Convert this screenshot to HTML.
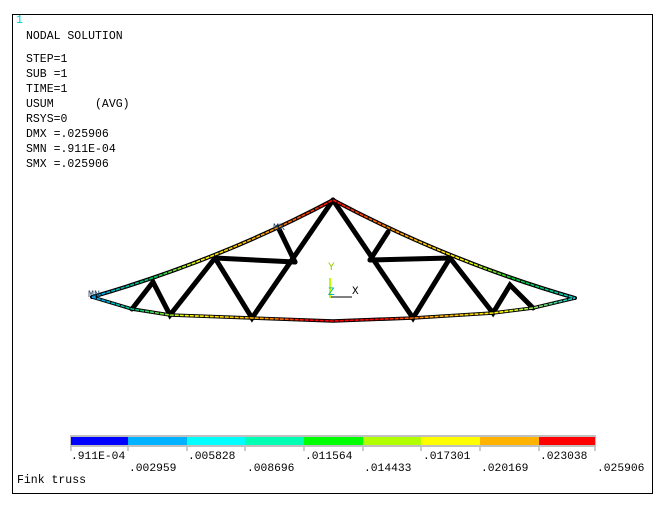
<!DOCTYPE html>
<html><head><style>
body{margin:0;width:669px;height:509px;background:#fff;overflow:hidden;position:relative;font-family:"Liberation Mono",monospace;}
.t{position:absolute;font-size:11.5px;color:#000;white-space:pre;line-height:12px;}
#frame{position:absolute;left:12px;top:14px;width:641px;height:480px;border:1.5px solid #000;box-sizing:border-box;}
</style></head><body>
<div id="frame"></div>
<div class="t" style="left:16px;top:15px;color:#0cc">1</div>
<div class="t" style="left:26px;top:31px">NODAL SOLUTION</div>
<div class="t" style="left:26px;top:54px">STEP=1</div>
<div class="t" style="left:26px;top:69px">SUB =1</div>
<div class="t" style="left:26px;top:84px">TIME=1</div>
<div class="t" style="left:26px;top:99px">USUM      (AVG)</div>
<div class="t" style="left:26px;top:114px">RSYS=0</div>
<div class="t" style="left:26px;top:129px">DMX =.025906</div>
<div class="t" style="left:26px;top:144px">SMN =.911E-04</div>
<div class="t" style="left:26px;top:159px">SMX =.025906</div>
<svg width="669" height="509" style="position:absolute;left:0;top:0">
<defs>
<linearGradient id="gl" x1="0" x2="1"><stop offset="0" stop-color="#0af"/><stop offset=".25" stop-color="#0c6"/><stop offset=".45" stop-color="#ff0"/><stop offset=".7" stop-color="#fa0"/><stop offset="1" stop-color="#f00"/></linearGradient>
<linearGradient id="gr" x1="0" x2="1"><stop offset="0" stop-color="#f00"/><stop offset=".3" stop-color="#fa0"/><stop offset=".55" stop-color="#ff0"/><stop offset=".75" stop-color="#0c3"/><stop offset="1" stop-color="#0cc"/></linearGradient>
<linearGradient id="gb" x1="0" x2="1"><stop offset="0" stop-color="#0af"/><stop offset=".1" stop-color="#0c6"/><stop offset=".2" stop-color="#ff0"/><stop offset=".35" stop-color="#fa0"/><stop offset=".45" stop-color="#f00"/><stop offset=".6" stop-color="#f00"/><stop offset=".7" stop-color="#fa0"/><stop offset=".85" stop-color="#ff0"/><stop offset="1" stop-color="#0cc"/></linearGradient>
</defs>
<g stroke="#000" stroke-linecap="round" fill="none">
<path d="M92,297 Q220,260 333,200" stroke-width="4"/>
<path d="M333,200 Q450,262 575,298" stroke-width="4"/>
<path d="M92,297 L132,309 L170,315 L252,318 L333,321 L413,318 L493,313 L533,308 L575,298" stroke-width="3.5"/>
<g stroke-width="5">
<path d="M132,309 L153,282 L170,315 L215,258 L252,318 L333,200"/>
<path d="M215,258 L295,262"/>
<path d="M295,262 L278,227"/>
<path d="M533,308 L510,285 L493,313 L450,258 L413,318 L333,200"/>
<path d="M450,258 L370,260"/>
<path d="M370,260 L388,232"/>
</g>
</g>
<g fill="none" stroke-width="1.6" stroke-dasharray="4 1">
<path d="M92,297 Q220,260 333,200" stroke="url(#gl)"/>
<path d="M333,200 Q450,262 575,298" stroke="url(#gr)"/>
<path d="M92,297 L132,309 L170,315 L252,318 L333,321 L413,318 L493,313 L533,308 L575,298" stroke="url(#gb)"/>
</g>
<line x1="330" y1="278" x2="330" y2="298" stroke="#bf0" stroke-width="2"/>
<line x1="331" y1="297" x2="352" y2="297" stroke="#000" stroke-width="1"/>
<text x="328" y="270" font-family="Liberation Mono" font-size="11" fill="#9c0">Y</text>
<text x="328" y="295" font-family="Liberation Mono" font-size="11" fill="#0aa">Z</text>
<text x="352" y="294" font-family="Liberation Mono" font-size="11" fill="#000">X</text>
<text x="88" y="297" font-family="Liberation Mono" font-size="10" fill="#246">MN</text>
<text x="273" y="230" font-family="Liberation Mono" font-size="10" fill="#246">MX</text>
<rect x="70" y="435" width="526" height="12" fill="#c0c0c0"/>
<rect x="71" y="437" width="57" height="8" fill="#0000ff"/>
<rect x="128" y="437" width="59" height="8" fill="#00b2ff"/>
<rect x="187" y="437" width="58" height="8" fill="#00ffff"/>
<rect x="245" y="437" width="59" height="8" fill="#00ffb2"/>
<rect x="304" y="437" width="59" height="8" fill="#00ff00"/>
<rect x="363" y="437" width="58" height="8" fill="#b2ff00"/>
<rect x="421" y="437" width="59" height="8" fill="#ffff00"/>
<rect x="480" y="437" width="59" height="8" fill="#ffb200"/>
<rect x="539" y="437" width="56" height="8" fill="#ff0000"/>
<g stroke="#999" stroke-width="1">
<line x1="71" y1="447" x2="71" y2="451"/><line x1="128" y1="447" x2="128" y2="451"/><line x1="187" y1="447" x2="187" y2="451"/><line x1="245" y1="447" x2="245" y2="451"/><line x1="304" y1="447" x2="304" y2="451"/><line x1="363" y1="447" x2="363" y2="451"/><line x1="421" y1="447" x2="421" y2="451"/><line x1="480" y1="447" x2="480" y2="451"/><line x1="539" y1="447" x2="539" y2="451"/><line x1="595" y1="447" x2="595" y2="451"/>
</g>
<g font-family="Liberation Mono" font-size="11.3" fill="#000">
<text x="71" y="459">.911E-04</text>
<text x="129" y="471">.002959</text>
<text x="188" y="459">.005828</text>
<text x="247" y="471">.008696</text>
<text x="305" y="459">.011564</text>
<text x="364" y="471">.014433</text>
<text x="423" y="459">.017301</text>
<text x="481" y="471">.020169</text>
<text x="540" y="459">.023038</text>
<text x="597" y="471">.025906</text>
</g>
</svg>
<div class="t" style="left:17px;top:475px">Fink truss</div>
</body></html>
